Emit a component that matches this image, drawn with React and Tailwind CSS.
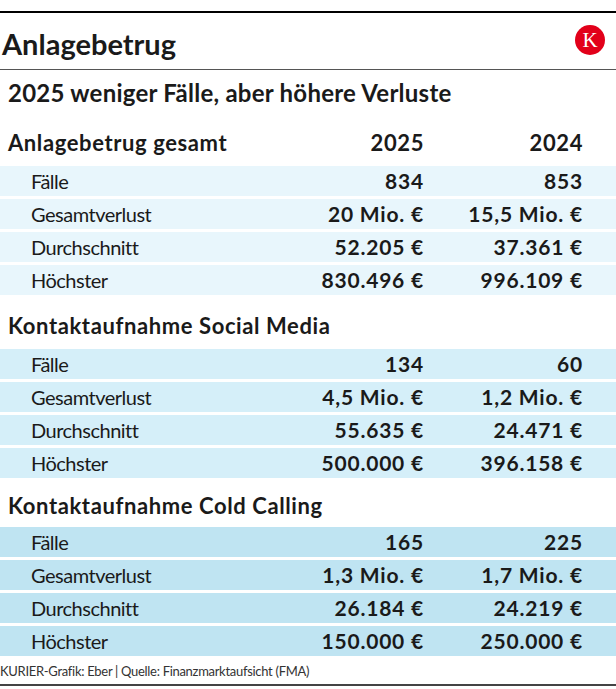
import React from "react";

const sections = [
  {
    title: "Anlagebetrug gesamt",
    bg: "bg-[#e8f6fc]",
    showYears: true,
    rows: [
      ["Fälle", "834", "853"],
      ["Gesamtverlust", "20 Mio. €", "15,5 Mio. €"],
      ["Durchschnitt", "52.205 €", "37.361 €"],
      ["Höchster", "830.496 €", "996.109 €"],
    ],
  },
  {
    title: "Kontaktaufnahme Social Media",
    bg: "bg-[#d5eff9]",
    rows: [
      ["Fälle", "134", "60"],
      ["Gesamtverlust", "4,5 Mio. €", "1,2 Mio. €"],
      ["Durchschnitt", "55.635 €", "24.471 €"],
      ["Höchster", "500.000 €", "396.158 €"],
    ],
  },
  {
    title: "Kontaktaufnahme Cold Calling",
    bg: "bg-[#bfe4f2]",
    rows: [
      ["Fälle", "165", "225"],
      ["Gesamtverlust", "1,3 Mio. €", "1,7 Mio. €"],
      ["Durchschnitt", "26.184 €", "24.219 €"],
      ["Höchster", "150.000 €", "250.000 €"],
    ],
  },
];

const headStyles = ["h-[50px] pt-[2px]", "h-[54px] pt-[6px]", "h-[49px] pt-[5px]"];

export default function App() {
  return (
    <div className="w-[616px] h-[689px] bg-white pt-[11px] text-[#1a1a1a] font-['Lato',sans-serif] overflow-hidden">
      <div className="border-t-2 border-black">
        {/* Title bar */}
        <div className="h-[57px] flex items-center justify-between border-b border-[#555] pt-[5px]">
          <h1 className="text-[29px] font-bold leading-none pl-[2px]">Anlagebetrug</h1>
          <div className="w-[30px] h-[30px] rounded-full bg-[#e2001a] flex items-center justify-center mr-[11px] -mt-[7px]">
            <span className="text-white text-[21px] leading-none font-['Liberation_Serif',serif]">K</span>
          </div>
        </div>

        <div className="h-[46px] flex items-center pl-[8px]">
          <h2 className="text-[24px] font-bold leading-none tracking-[0.25px]">2025 weniger Fälle, aber höhere Verluste</h2>
        </div>

        {sections.map((s, i) => (
          <div key={s.title}>
            <div className={`${headStyles[i]} flex items-center pl-[8px] text-[22px] font-bold tracking-[0.6px]`}>
              <span className="flex-1">{s.title}</span>
              {s.showYears && (
                <>
                  <span className="w-[130px] text-right">2025</span>
                  <span className="w-[159px] text-right">2024</span>
                  <span className="w-[33px]" />
                </>
              )}
            </div>
            <div className="flex flex-col gap-[3px]">
              {s.rows.map((r) => (
                <div key={r[0]} className={`${s.bg} h-[30px] flex items-center text-[20px]`}>
                  <span className="flex-1 pl-[31px] tracking-[-0.5px]">{r[0]}</span>
                  <span className="w-[160px] text-right font-bold text-[21px] tracking-[0.8px]">{r[1]}</span>
                  <span className="w-[159px] text-right font-bold text-[21px] tracking-[0.8px]">{r[2]}</span>
                  <span className="w-[33px]" />
                </div>
              ))}
            </div>
          </div>
        ))}

        <div className="h-[30px] flex items-end pb-[3px] border-b-2 border-[#444] text-[13px] text-[#333] tracking-[-0.3px]">
          KURIER-Grafik: Eber | Quelle: Finanzmarktaufsicht (FMA)
        </div>
      </div>
    </div>
  );
}
